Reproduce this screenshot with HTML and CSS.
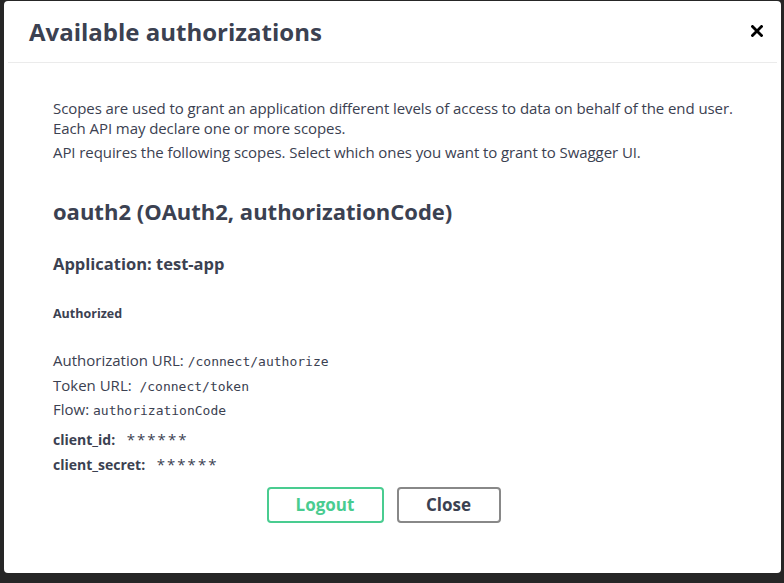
FILE: index.html
```html
<!DOCTYPE html>
<html lang="en">
<head>
    <meta charset="UTF-8">
    <meta name="viewport" content="width=device-width, initial-scale=1.0">
    <title>Available authorizations</title>
    <link rel="stylesheet" href="styles.css">
</head>
<body>
    <div class="modal">
        <div class="modal-header">
            <h3>Available authorizations</h3>
            <button class="close-modal" aria-label="Close">
                <svg width="12" height="12" viewBox="0 0 12 12">
                    <path d="M1.5 1.5 L10.5 10.5 M10.5 1.5 L1.5 10.5" stroke="#000" stroke-width="2.8" stroke-linecap="square"/>
                </svg>
            </button>
        </div>
        <div class="modal-content">
            <p class="scopes-info">Scopes are used to grant an application different levels of access to data on behalf of the end user. Each API may declare one or more scopes.</p>
            <p class="scopes-info">API requires the following scopes. Select which ones you want to grant to Swagger UI.</p>

            <h4 class="auth-name">oauth2 (OAuth2, authorizationCode)</h4>
            <h5 class="app-name">Application: test-app</h5>
            <h6 class="status">Authorized</h6>

            <p class="row first">Authorization URL: <code>/connect/authorize</code></p>
            <p class="row">Token URL:&nbsp; <code>/connect/token</code></p>
            <p class="row">Flow: <code>authorizationCode</code></p>
            <div class="field first"><label>client_id:</label> <span>******</span></div>
            <div class="field"><label>client_secret:</label> <span>******</span></div>

            <div class="auth-btns">
                <button class="btn logout">Logout</button>
                <button class="btn close">Close</button>
            </div>
        </div>
    </div>
</body>
</html>
```

FILE: styles.css
```css
body {
    margin: 0;
    padding: 1px 3px 0 4px;
    height: 583px;
    box-sizing: border-box;
    background-color: #262626;
    font-family: "Open Sans", "Noto Sans", sans-serif;
    color: #3b4151;
    overflow: hidden;
}

.modal {
    background-color: #ffffff;
    border-radius: 4px;
    height: 572px;
    box-sizing: border-box;
}

.modal-header {
    display: flex;
    align-items: center;
    justify-content: space-between;
    height: 61px;
    margin: 0 4px;
    padding: 0 14px 0 21px;
    border-bottom: 1px solid #ebebeb;
}

.modal-header h3 {
    margin: 0;
    font-size: 24px;
    font-weight: 700;
    color: #3b4151;
}

.close-modal {
    background: none;
    border: none;
    padding: 0;
    margin-top: -2px;
    cursor: pointer;
    display: flex;
}

.modal-content {
    padding: 35px 40px 0 49px;
}

.scopes-info {
    margin: 0 0 4px;
    font-size: 15px;
    line-height: 20px;
    letter-spacing: -0.08px;
}

.auth-name {
    margin: 34px 0 0;
    font-size: 22px;
    font-weight: 700;
    line-height: 30px;
}

.app-name {
    margin: 26px 0 0;
    font-size: 16.5px;
    font-weight: 700;
    line-height: 24px;
}

.status {
    margin: 29px 0 0;
    font-size: 12.5px;
    font-weight: 700;
    line-height: 18px;
}

.row {
    margin: 0;
    font-size: 15px;
    line-height: 24.5px;
}

.row.first {
    margin-top: 25px;
}

.row code {
    font-family: "DejaVu Sans Mono", monospace;
    font-size: 13px;
    line-height: 1;
    color: #3b4151;
}

.field {
    font-size: 14px;
    line-height: 25px;
}

.field.first {
    margin-top: 5px;
}

.field label {
    font-weight: 700;
}

.field span {
    margin-left: 8px;
    font-size: 15px;
    line-height: 1;
    letter-spacing: 2px;
}

.auth-btns {
    display: flex;
    justify-content: center;
    gap: 13px;
    margin-top: 10px;
    padding-right: 27px;
}

.btn {
    height: 36px;
    box-sizing: border-box;
    padding: 0;
    font-family: "Open Sans", "Noto Sans", sans-serif;
    font-size: 17px;
    font-weight: 700;
    background: transparent;
    border: 2px solid #888888;
    border-radius: 4px;
    color: #3b4151;
    cursor: pointer;
}

.btn.logout {
    border-color: #49cc90;
    color: #49cc90;
    width: 117px;
}

.btn.close {
    width: 104px;
}
```
